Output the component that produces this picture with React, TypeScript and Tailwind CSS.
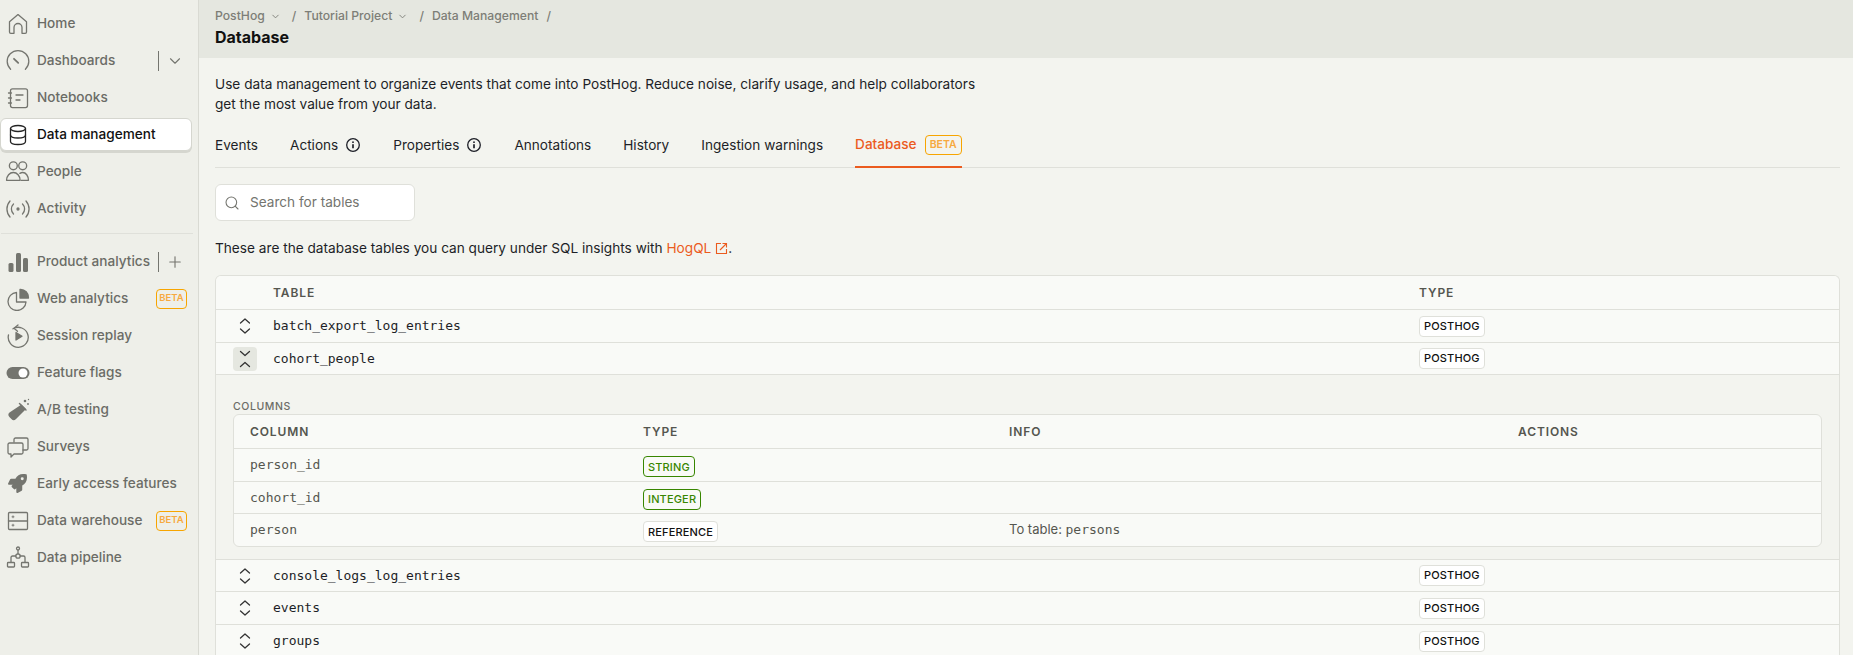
import React from "react";
import { ChevronDown, Plus, Search } from "lucide-react";
import { FaRocket } from "react-icons/fa";

const Ico = ({ children, s = 24, fill = false }: { children: React.ReactNode; s?: number; fill?: boolean }) => (
  <svg width={s} height={s} viewBox="0 0 24 24" fill={fill ? "currentColor" : "none"} stroke={fill ? "none" : "currentColor"} strokeWidth={1.3} strokeLinecap="round" strokeLinejoin="round">
    {children}
  </svg>
);

const icons: Record<string, React.ReactNode> = {
  home: <Ico><path d="M3.5 20V9.8L12 2.6l8.5 7.2V20a1.3 1.3 0 0 1-1.3 1.3H16V15.5a4 4 0 0 0-8 0v5.8H4.8A1.3 1.3 0 0 1 3.5 20z" /></Ico>,
  dash: <Ico><path d="M4.6 20.2a10.8 10.8 0 1 1 14.8 0" /><path d="M12.2 13.8 8 9.8" strokeWidth={1.8} /></Ico>,
  note: <Ico><rect x="4.5" y="2.8" width="17" height="18.8" rx="2" /><path d="M2.5 7h3M2.5 12h3M2.5 17h3M10 9h7M10 14h4" /></Ico>,
  db: <Ico><ellipse cx="12" cy="5.5" rx="7.5" ry="3" /><path d="M4.5 5.5v13c0 1.7 3.4 3 7.5 3s7.5-1.3 7.5-3v-13" /><path d="M4.5 12c0 1.7 3.4 3 7.5 3s7.5-1.3 7.5-3" /></Ico>,
  people: <Ico s={25}><circle cx="8" cy="6.5" r="3.8" /><circle cx="17" cy="6.5" r="3.8" /><path d="M1.5 20.5c0-4.4 3-7.5 6.5-7.5s6.5 3.1 6.5 7.5z" /><path d="M15.5 20.5h7c0-4.4-2.5-7.5-5.5-7.5-1 0-1.9.3-2.7.8" /></Ico>,
  activity: <Ico><circle cx="12" cy="12" r="1" fill="currentColor" /><path d="M7.5 7a7 7 0 0 0 0 10M16.5 7a7 7 0 0 1 0 10M4 4a12 12 0 0 0 0 16M20 4a12 12 0 0 1 0 16" /></Ico>,
  bars: <Ico fill><rect x="2.5" y="13" width="5" height="9" rx="1.5" /><rect x="10" y="3" width="5" height="19" rx="1.5" /><rect x="17" y="8" width="5" height="14" rx="1.5" /></Ico>,
  pie: <Ico><path d="M10.5 5.5a9 9 0 1 0 9.5 9.5h-9.5z" /><path d="M14 2.5a8 8 0 0 1 8.5 8.5H14z" fill="currentColor" /></Ico>,
  replay: <Ico><path d="M7 4.8A10 10 0 1 1 2.5 11" /><path d="M12 1 8 4.3l3.5 3" /><path d="M10 8.5V16l6-3.8z" fill="currentColor" /></Ico>,
  toggle: <svg width="24" height="14" viewBox="0 0 24 14"><rect x="0.5" y="1" width="23" height="12" rx="6" fill="currentColor" /><circle cx="17" cy="7" r="4.5" fill="#fff" /></svg>,
  flask: <Ico fill><path d="M15.5 6.5 20 11 10 21a3.2 3.2 0 0 1-4.6 0l-2-2a3.2 3.2 0 0 1 .1-4.5z" /><path d="M13.5 5.5l6.5 6.5" stroke="currentColor" strokeWidth={1.5} fill="none" /><circle cx="19" cy="3" r="1.3" /><circle cx="22" cy="6" r="0.9" /><circle cx="22.5" cy="1.5" r="0.7" /></Ico>,
  surveys: <Ico><path d="M8 7V4.5A1.5 1.5 0 0 1 9.5 3h11A1.5 1.5 0 0 1 22 4.5v9a1.5 1.5 0 0 1-1.5 1.5H17" /><path d="M3.5 8h12A1.5 1.5 0 0 1 17 9.5v8a1.5 1.5 0 0 1-1.5 1.5H8l-3 3v-3H3.5A1.5 1.5 0 0 1 2 17.5v-8A1.5 1.5 0 0 1 3.5 8z" /></Ico>,
  rocket: <FaRocket size={19} />,
  warehouse: <Ico><rect x="2.5" y="3.5" width="19" height="17" rx="1" /><path d="M2.5 12h19" /><path d="M6 7.8h2M7 6.8v2M6 16.2h2M7 15.2v2" strokeWidth={0.9} /></Ico>,
  pipeline: <Ico><circle cx="12" cy="2.5" r="1.5" /><path d="M12 4v4" /><circle cx="12" cy="10" r="2.2" /><path d="M9.8 10H6.5A1.500 1.500 0 0 0 5 11.5V16M14.2 10h3.300a1.500 1.500 0 0 1 1.500 1.500V16" /><rect x="1.5" y="16.5" width="7" height="4.5" rx="0.8" /><rect x="15.5" y="16.5" width="7" height="4.5" rx="0.8" /></Ico>,
};

const InfoIcon = () => (
  <svg width="16" height="16" viewBox="0 0 16 16" fill="none" stroke="currentColor" strokeWidth="1.3" className="ml-[7px]">
    <circle cx="8" cy="8" r="6.3" />
    <circle cx="8" cy="5.2" r="0.9" fill="currentColor" stroke="none" />
    <path d="M8 7.3v4" strokeWidth="1.7" />
  </svg>
);

const LinkIcon = () => (
  <svg width="13" height="13" viewBox="0 0 13 13" fill="none" stroke="currentColor" strokeWidth="1.1" className="text-[#eb5b1e] ml-[4px]">
    <path d="M6 1.5H1.5v10h10V7" />
    <path d="M5 8l6-6M7.5 1.5h4v4" />
  </svg>
);

const Beta = ({ className = "" }: { className?: string }) => (
  <span className={`inline-flex items-center justify-center h-[20px] border border-[#f7a501] rounded-[4px] font-semibold text-[#f7a940] ${className}`}>BETA</span>
);

const NavItem = ({ icon, label, active, right }: { icon: string; label: string; active?: boolean; right?: React.ReactNode }) => (
  <div className={`h-[33px] mb-[4px] flex items-center pl-[4px] text-[13.6px] font-medium ${active ? "bg-white text-[#111] border border-[#d5d6cf] rounded-[6px] shadow-[0_2px_0_#d5d6cf] -ml-px w-[192px]" : "text-[#6b6c66] w-[191px]"}`}>
    <span className={`w-[25px] h-[25px] flex items-center justify-center shrink-0 ${active ? "text-[#222]" : "text-[#74756f]"}`}>{icons[icon]}</span>
    <span className="ml-[7px] whitespace-nowrap">{label}</span>
    {right}
  </div>
);

const Split = ({ icon }: { icon: React.ReactNode }) => (
  <span className="ml-auto flex items-center mr-px">
    <span className="w-px h-[20px] bg-[#74756f]" />
    <span className="w-[32px] flex justify-center text-[#74756f]">{icon}</span>
  </span>
);

const Tag = ({ children, tone = "plain" }: { children: React.ReactNode; tone?: "plain" | "green" }) => (
  <span className={`inline-flex items-center h-[21px] px-[4px] rounded-[4px] border text-[11px] font-medium tracking-[0.15px] ${tone === "green" ? "border-[#388600] text-[#388600]" : "border-[#dfe0da] text-[#111] bg-white"}`}>{children}</span>
);

const Toggle = ({ open }: { open?: boolean }) => (
  <span className={`w-[24px] h-[24px] rounded-[4px] flex items-center justify-center ${open ? "bg-[#e5e7e0]" : ""}`}>
    <svg width="14" height="18" viewBox="0 0 14 18" fill="none" stroke="#333" strokeWidth="1.3" strokeLinecap="round" strokeLinejoin="round">
      {open ? <path d="M2.5 1.5 7 5.5l4.5-4M2.5 16.5 7 12.5l4.5 4" /> : <path d="M2.5 6 7 2l4.5 4M2.5 12 7 16l4.5-4" />}
    </svg>
  </span>
);

const Row = ({ name, open, h = "h-[33px]" }: { name: string; open?: boolean; h?: string }) => (
  <div className={`flex items-center ${h} border-t border-[#dfe0da] bg-[#f9faf7]`}>
    <div className="w-[57px] pl-[17px] flex items-center shrink-0"><Toggle open={open} /></div>
    <div className="w-[1146px] shrink-0 font-['DejaVu_Sans_Mono',monospace] text-[13px] text-[#1d1f27]">{name}</div>
    <Tag>POSTHOG</Tag>
  </div>
);

const Th = ({ className, children }: { className: string; children?: React.ReactNode }) => (
  <div className={`shrink-0 text-[12px] font-semibold tracking-[0.9px] text-[#55564f] ${className}`}>{children}</div>
);

const ColRow = ({ name, type, tone, info, h = "h-[33px]" }: { name: string; type: string; tone?: "green"; info?: boolean; h?: string }) => (
  <div className={`flex items-center ${h} border-t border-[#dfe0da]`}>
    <div className="w-[409px] pl-[16px] shrink-0 font-['DejaVu_Sans_Mono',monospace] text-[13px] text-[#55564f]">{name}</div>
    <div className="w-[366px] shrink-0"><Tag tone={tone}>{type}</Tag></div>
    {info && <div className="text-[13px] text-[#55564f]">To table: <span className="font-['DejaVu_Sans_Mono',monospace] text-[13px]">persons</span></div>}
  </div>
);

const tabs = ["Events", "Actions", "Properties", "Annotations", "History", "Ingestion warnings"];

export default function App() {
  return (
    <div className="w-[1853px] h-[655px] overflow-hidden flex bg-[#f3f4ef] font-['Inter',sans-serif]">
      <aside className="w-[199px] shrink-0 h-full bg-[#eeefe9] border-r border-[#d9dad3] pt-[7px] pl-[1px]">
        <NavItem icon="home" label="Home" />
        <NavItem icon="dash" label="Dashboards" right={<Split icon={<ChevronDown size={18} strokeWidth={1.5} />} />} />
        <NavItem icon="note" label="Notebooks" />
        <NavItem icon="db" label="Data management" active />
        <NavItem icon="people" label="People" />
        <NavItem icon="activity" label="Activity" />
        <div className="w-[192px] border-t border-[#dfe0da] mt-[8px] mb-[11px]" />
        <NavItem icon="bars" label="Product analytics" right={<Split icon={<Plus size={18} strokeWidth={1.5} />} />} />
        <NavItem icon="pie" label="Web analytics" right={<Beta className="ml-auto mr-[5px] w-[31px] text-[9.5px]" />} />
        <NavItem icon="replay" label="Session replay" />
        <NavItem icon="toggle" label="Feature flags" />
        <NavItem icon="flask" label="A/B testing" />
        <NavItem icon="surveys" label="Surveys" />
        <NavItem icon="rocket" label="Early access features" />
        <NavItem icon="warehouse" label="Data warehouse" right={<Beta className="ml-auto mr-[5px] w-[31px] text-[9.5px]" />} />
        <NavItem icon="pipeline" label="Data pipeline" />
      </aside>
      <main className="flex-1 min-w-0">
        <header className="h-[58px] bg-[#e5e7e0] pl-[16px] pt-[8px]">
          <div className="flex items-center h-[17px] text-[12.2px] font-medium text-[#7d7e77] whitespace-nowrap">
            <span>PostHog</span><ChevronDown size={11} className="ml-[5px]" />
            <span className="ml-[11px]">/</span>
            <span className="ml-[8px]">Tutorial Project</span><ChevronDown size={11} className="ml-[5px]" />
            <span className="ml-[11px]">/</span>
            <span className="ml-[8px]">Data Management</span>
            <span className="ml-[8px]">/</span>
          </div>
          <h1 className="text-[16px] leading-[20px] mt-[2px] font-bold text-[#111]">Database</h1>
        </header>
        <div className="pl-[16px] pr-[13px]">
          <p className="mt-[16px] w-[780px] text-[13.65px] leading-[20px] text-[#1d1f27]">Use data management to organize events that come into PostHog. Reduce noise, clarify usage, and help collaborators get the most value from your data.</p>
          <div className="mt-[12px] h-[42px] flex items-stretch border-b border-[#dfe0da] text-[13.6px] text-[#1d1f27]">
            {tabs.map((t, i) => (
              <div key={t} className="flex items-center mr-[32px] pb-[3px]">
                {t}
                {(i === 1 || i === 2) && <InfoIcon />}
              </div>
            ))}
            <div className="flex items-center pb-[3px] border-b-2 border-[#eb5b1e] -mb-px font-medium text-[#eb5b1e]">
              Database<Beta className="ml-[8px] w-[37px] text-[10.5px]" />
            </div>
          </div>
          <div className="mt-[16px] w-[200px] h-[37px] bg-white border border-[#dfe0da] rounded-[6px] flex items-center pl-[8px] text-[13.6px] text-[#74756f]">
            <Search size={16} strokeWidth={1.6} />
            <span className="ml-[10px]">Search for tables</span>
          </div>
          <p className="mt-[17px] h-[20px] text-[13.65px] leading-[20px] text-[#1d1f27] flex items-center whitespace-pre">
            These are the database tables you can query under SQL insights with <span className="text-[#eb5b1e]">HogQL</span><LinkIcon />.
          </p>
          <div className="mt-[17px] border border-b-0 border-[#dfe0da] rounded-t-[6px] overflow-hidden">
            <div className="flex items-center h-[33px] bg-[#f9faf7]">
              <Th className="w-[57px]" />
              <Th className="w-[1146px]">TABLE</Th>
              <Th className="">TYPE</Th>
            </div>
            <Row name="batch_export_log_entries" />
            <Row name="cohort_people" open h="h-[32px]" />
            <div className="h-[185px] border-t border-[#dfe0da] pl-[17px] pr-[17px] pt-[24px]">
              <div className="h-[15px] text-[10.5px] font-medium tracking-[0.6px] leading-[16px] text-[#6b6c66]">COLUMNS</div>
              <div className="border border-[#dfe0da] rounded-[6px] bg-[#f9faf7] overflow-hidden">
                <div className="flex items-center h-[33px]">
                  <Th className="w-[409px] pl-[16px]">COLUMN</Th>
                  <Th className="w-[366px]">TYPE</Th>
                  <Th className="w-[509px]">INFO</Th>
                  <Th className="">ACTIONS</Th>
                </div>
                <ColRow name="person_id" type="STRING" tone="green" />
                <ColRow name="cohort_id" type="INTEGER" tone="green" h="h-[32px]" />
                <ColRow name="person" type="REFERENCE" info />
              </div>
            </div>
            <Row name="console_logs_log_entries" h="h-[32px]" />
            <Row name="events" />
            <Row name="groups" />
          </div>
        </div>
      </main>
    </div>
  );
}
